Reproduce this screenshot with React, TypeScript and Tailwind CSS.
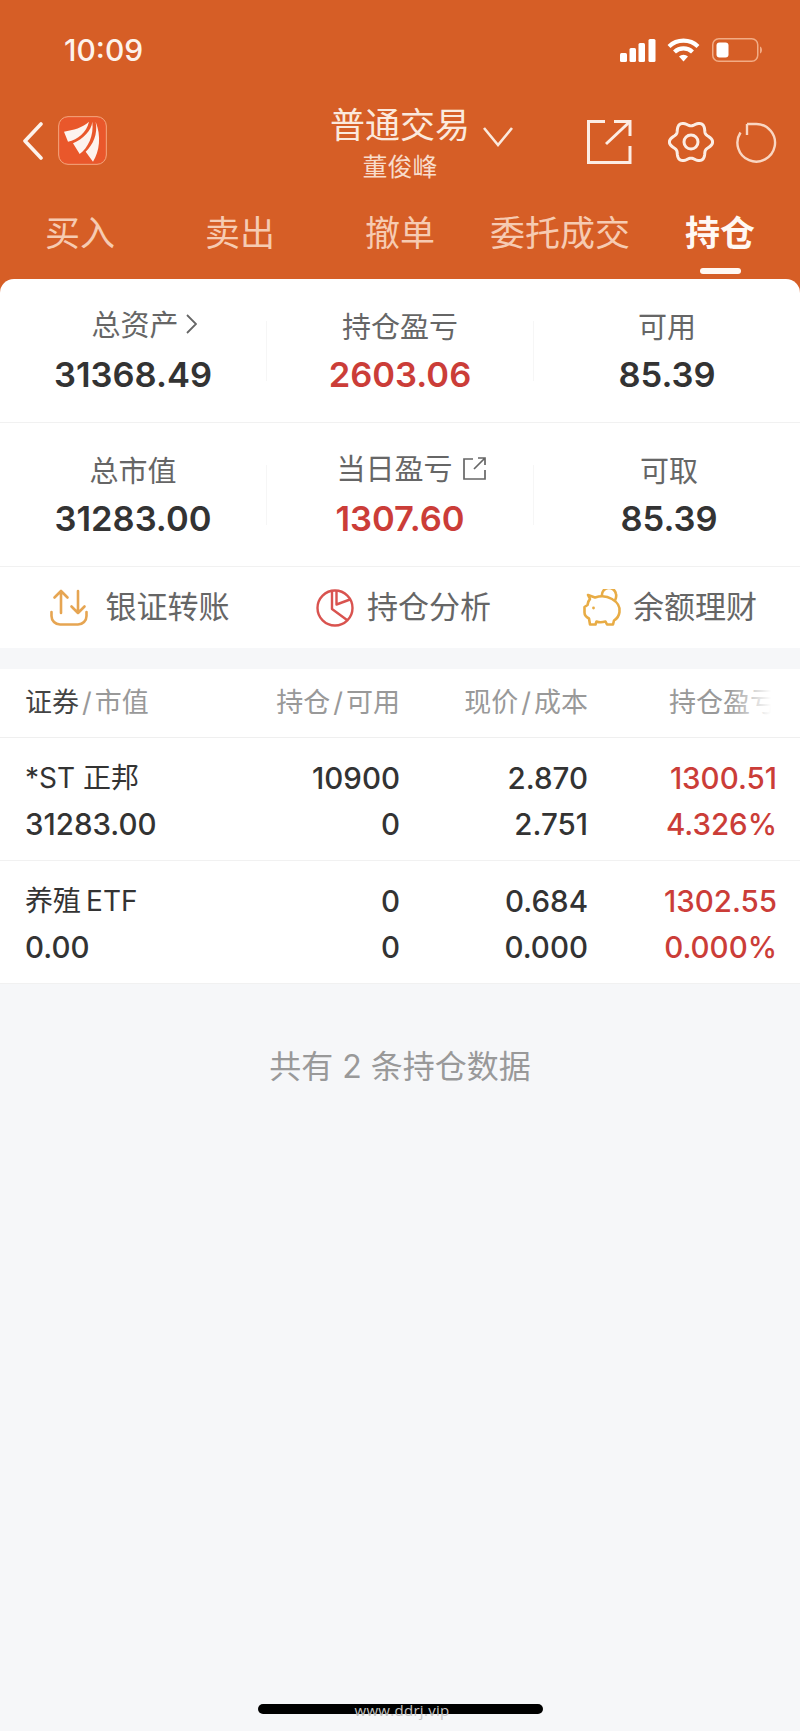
import React from 'react';

const gearPath = (() => {
  const pts: string[] = [];
  for (let i = 0; i < 120; i++) {
    const a = (i / 120) * Math.PI * 2;
    const r = 19.2 + 2.4 * Math.cos(6 * a);
    pts.push(`${(23 + r * Math.cos(a)).toFixed(2)} ${(22 + r * 0.96 * Math.sin(a)).toFixed(2)}`);
  }
  return `M${pts.join('L')}Z`;
})();

const tabs = ['买入', '卖出', '撤单', '委托成交', '持仓'];

const positions = [
  { name: '*ST 正邦', value: '31283.00', hold: '10900', free: '0', price: '2.870', cost: '2.751', pnl: '1300.51', pct: '4.326%' },
  { name: '养殖\u2009ETF', value: '0.00', hold: '0', free: '0', price: '0.684', cost: '0.000', pnl: '1302.55', pct: '0.000%' },
];

const StatusIcons = () => (
  <div className="flex items-center">
    <svg width="36" height="24" viewBox="0 0 36 24" fill="#fff">
      <rect x="0" y="15" width="7" height="9" rx="1.5" />
      <rect x="9.5" y="10" width="6.5" height="14" rx="1.5" />
      <rect x="18.5" y="5" width="6.5" height="19" rx="1.5" />
      <rect x="28.5" y="1" width="7" height="23" rx="1.5" />
    </svg>
    <svg className="ml-[11px]" width="33" height="24" viewBox="0 0 33 24" fill="none" stroke="#fff" strokeWidth="4.2">
      <path d="M2 8.5A21 21 0 0 1 31 8.5" />
      <path d="M7.5 14A13 13 0 0 1 25.5 14" />
      <path d="M12 18.5A6.5 6.5 0 0 1 21 18.5L16.5 23.5Z" fill="#fff" stroke="none" />
    </svg>
    <svg className="ml-[12px]" width="50" height="24" viewBox="0 0 50 24" fill="none">
      <rect x="0.75" y="0.75" width="45" height="22.5" rx="6" stroke="#F2AC85" strokeWidth="1.5" />
      <rect x="4.5" y="4.5" width="12" height="15" rx="3" fill="#fff" />
      <path d="M48 8.5c1.5.6 2 2 2 3.5s-.5 2.900-2 3.500Z" fill="#F2AC85" />
    </svg>
  </div>
);

const AppLogo = () => (
  <svg width="49" height="49" viewBox="0 0 147 147">
    <rect x="2" y="2" width="143" height="143" rx="28" fill="#E9572B" stroke="#F5A880" strokeWidth="3" />
    <path d="M93 17C75 35 45 42 18 47L30 77C60 70 85 50 93 17Z" fill="#FDF3EE" />
    <path d="M103 17C100 45 75 68 45 82L65 114C90 95 108 60 103 17Z" fill="#FDF3EE" />
    <path d="M113 17C120 55 105 85 83 107L105 137C125 105 130 60 113 17Z" fill="#FDF3EE" />
  </svg>
);

const ShareIcon = () => (
  <svg width="45" height="44" viewBox="0 0 45 44" fill="none" stroke="#FCEDE4" strokeWidth="3">
    <path d="M18 1.500H1.500V42.500H43V26" />
    <path d="M19 24L43 1.500" />
    <path d="M27 1.500H43V16" />
  </svg>
);

const GearIcon = () => (
  <svg width="46" height="44" viewBox="0 0 46 44" fill="none" stroke="#FCEDE4" strokeWidth="3">
    <path d={gearPath} strokeLinejoin="round" />
    <circle cx="23" cy="22" r="7" />
  </svg>
);

const RefreshIcon = () => (
  <svg width="41" height="41" viewBox="0 0 41 41" fill="none" stroke="#F9D6C2" strokeWidth="2.400">
    <path d="M11 2H20.500A18.800 18.800 0 1 1 4.500 10.500" />
    <path d="M11 2V13" />
  </svg>
);

const TransferIcon = () => (
  <svg width="38" height="38" viewBox="0 0 38 38" fill="none" stroke="#E6A552" strokeWidth="2.600" strokeLinecap="round" strokeLinejoin="round">
    <path d="M11 2V24M4.500 8.500L11 2L17.500 8.500" />
    <path d="M28 2V24M21.500 17.500L28 24L34.500 17.500" />
    <path d="M1.500 23V27A8.500 8.500 0 0 0 10 35.500H28A8.500 8.500 0 0 0 36.500 27V23" />
  </svg>
);

const PieIcon = () => (
  <svg width="38" height="38" viewBox="0 0 38 38" fill="none" stroke="#D9534F" strokeWidth="2.400" strokeLinejoin="round">
    <circle cx="19" cy="19" r="17.500" />
    <path d="M16 2V20L31 31" />
    <path d="M20.500 2V15.500L34 10.500" />
  </svg>
);

const PigIcon = () => (
  <svg width="39" height="38" viewBox="0 0 39 38" fill="none" stroke="#E8AC45" strokeWidth="2.600" strokeLinejoin="round">
    <path d="M5 6L12 8.500C18 6.500 24 7 29 10C34 13 37.500 18 36.500 23C36 27 33.500 30 31 31.500L30 35.500H24L22.500 32.500C19 33.500 16 33.500 13.500 32.500L12.500 35.500H7L6 29.500C4 28.500 1.500 26 1.500 23.500V18L4.500 16C5 13 6 11 7 10Z" />
    <path d="M19 7A7 7 0 0 1 33 5C33.500 7 33 9.500 32 11.500" />
    <circle cx="10.500" cy="19" r="1.400" fill="#E8AC45" stroke="none" />
  </svg>
);

const Stat = ({ label, value, red, suffix, labelClass = '', className = '' }: { label: string; value: string; red?: boolean; suffix?: React.ReactNode; labelClass?: string; className?: string }) => (
  <div className={`flex-1 flex flex-col items-center pt-[4px] ${className}`}>
    <div className={`flex items-center h-[40px] text-[29px] text-[#666] ${labelClass}`}>
      {label}
      {suffix}
    </div>
    <div className={`mt-[5px] h-[44px] leading-[44px] text-[34.5px] font-semibold ${red ? 'text-[#CB3D38]' : 'text-[#333]'}`}>{value}</div>
  </div>
);

const Divider = () => <div className="w-px h-[60px] bg-[#F6F6F6]" />;

const Action = ({ icon, text, className }: { icon: React.ReactNode; text: string; className: string }) => (
  <div className={`flex items-center justify-center ${className} text-[31px] text-[#666]`}>
    {icon}
    <span>{text}</span>
  </div>
);

const HeaderCell = ({ a, b, first }: { a: string; b: string; first?: boolean }) => (
  <div className={first ? 'text-left text-[#999]' : 'text-right text-[#999]'}>
    <span className={first ? 'text-[#444]' : ''}>{a}</span>
    <span className="mx-[3px]">/</span>
    {b}
  </div>
);

export default function App() {
  return (
    <div className="relative w-[800px] h-[1731px] overflow-hidden bg-[#F6F7F9] font-[family-name:Inter,'Noto_Sans_CJK_SC',sans-serif]">
      {/* orange header */}
      <header className="h-[293px] bg-[#D65E26] text-white">
        <div className="flex items-center justify-between h-[104px] pl-[64px] pr-[38px] pb-[4px]">
          <span className="text-[30px] font-medium text-[#FDF3EC]">10:09</span>
          <StatusIcons />
        </div>
        <div className="flex items-start h-[108px]">
          <div className="w-[300px] flex items-center pl-[22px] pt-[12px]">
            <svg width="22" height="38" viewBox="0 0 22 38" fill="none" stroke="#FDF3EC" strokeWidth="3.600" strokeLinecap="round" strokeLinejoin="round">
              <path d="M19 2L3 19L19 36" />
            </svg>
            <div className="ml-[14px]">
              <AppLogo />
            </div>
          </div>
          <div className="w-[200px] flex flex-col items-center">
            <div className="relative h-[42px] leading-[42px] text-[35px] text-[#FBE9DD]">
              普通交易
              <svg className="absolute left-[152px] top-[22px]" width="32" height="22" viewBox="0 0 32 22" fill="none" stroke="#FBE9DD" strokeWidth="2.600">
                <path d="M2 2L16 19L30 2" />
              </svg>
            </div>
            <div className="mt-[5px] h-[32px] leading-[32px] text-[25px] text-[#F8DCCB]">董俊峰</div>
          </div>
          <div className="flex-1 flex items-center pl-[87px] pt-[16px]">
            <ShareIcon />
            <div className="ml-[36px]">
              <GearIcon />
            </div>
            <div className="ml-[22px]">
              <RefreshIcon />
            </div>
          </div>
        </div>
        <nav className="grid grid-cols-5">
          {tabs.map((t, i) => (
            <div key={t} className="flex flex-col items-center">
              <span className={`h-[42px] leading-[42px] text-[35px] ${i === 4 ? 'font-bold text-[#FFF8F3]' : 'text-[#F6CBB2]'}`}>{t}</span>
              {i === 4 && <span className="mt-[14px] w-[41px] h-[6px] rounded-full bg-[#FFF8F3]" />}
            </div>
          ))}
        </nav>
      </header>

      {/* asset summary card */}
      <section className="-mt-[14px] relative rounded-t-[14px] bg-white">
        <div className="flex items-center h-[143px] border-b border-[#F1F1F1] box-content">
          <Stat
            label="总资产"
            value="31368.49"
            labelClass="pl-[22px] -translate-y-[2px]"
            suffix={
              <svg className="ml-[7px] -mt-[4px]" width="11" height="20" viewBox="0 0 11 20" fill="none" stroke="#666" strokeWidth="1.800">
                <path d="M1 1L10 10L1 19" />
              </svg>
            }
          />
          <Divider />
          <Stat label="持仓盈亏" value="2603.06" red />
          <Divider />
          <Stat label="可用" value="85.39" />
        </div>
        <div className="flex items-center h-[143px] border-b border-[#F1F1F1] box-content">
          <Stat label="总市值" value="31283.00" />
          <Divider />
          <Stat
            label="当日盈亏"
            value="1307.60"
            red
            labelClass="pl-[22px] -translate-y-[2px]"
            suffix={
              <svg className="ml-[10px] -mt-[3px]" width="23" height="23" viewBox="0 0 23 23" fill="none" stroke="#666" strokeWidth="1.700">
                <path d="M10 2H1V22H22V13" />
                <path d="M11 12L22 1M15 1H22V8" />
              </svg>
            }
          />
          <Divider />
          <Stat label="可取" value="85.39" className="translate-x-[2px]" />
        </div>
        <div className="flex items-center h-[81px]">
          <Action icon={<TransferIcon />} text="银证转账" className="w-[279px] gap-[18px]" />
          <Action icon={<PieIcon />} text="持仓分析" className="w-[249px] gap-[13px]" />
          <Action icon={<PigIcon />} text="余额理财" className="flex-1 gap-[11px] pl-[12px]" />
        </div>
      </section>

      {/* holdings table */}
      <section className="mt-[21px] bg-white text-[27px]">
        <div className="relative grid grid-cols-[175px_200px_188px_189px] items-center h-[69px] pl-[25px] pr-[23px] border-b border-[#EFEFEF] whitespace-nowrap">
          <HeaderCell a="证券" b="市值" first />
          <HeaderCell a="持仓" b="可用" />
          <HeaderCell a="现价" b="成本" />
          <div className="text-right text-[#999]">持仓盈亏</div>
          <div className="absolute right-0 top-0 bottom-0 w-[72px] bg-gradient-to-r from-transparent to-white to-60%" />
        </div>
        {positions.map((p) => (
          <div key={p.name} className="grid grid-cols-[175px_200px_188px_189px] pl-[25px] pr-[23px] pt-[17px] pb-[13px] border-b border-[#F1F1F1] text-[29.5px] text-[#333] font-medium leading-[46px] whitespace-nowrap">
            <div>
              <div className="text-[28px] font-normal">{p.name}</div>
              <div>{p.value}</div>
            </div>
            <div className="text-right">
              <div>{p.hold}</div>
              <div>{p.free}</div>
            </div>
            <div className="text-right">
              <div>{p.price}</div>
              <div>{p.cost}</div>
            </div>
            <div className="text-right text-[#CB3D38]">
              <div>{p.pnl}</div>
              <div>{p.pct}</div>
            </div>
          </div>
        ))}
      </section>

      <p className="mt-[61px] text-center text-[32px] leading-[44px] text-[#999]">共有 2 条持仓数据</p>

      {/* home indicator with watermark */}
      <div className="absolute left-[258px] top-[1704px] w-[285px] h-[10px] rounded-full bg-black" />
      <div className="absolute left-[4px] right-0 top-[1701px] text-center text-[15px] leading-[18px] tracking-[0.3px] text-[#C4C4C4] font-[family-name:'Open_Sans',sans-serif]">www.ddrj.vip</div>
    </div>
  );
}
